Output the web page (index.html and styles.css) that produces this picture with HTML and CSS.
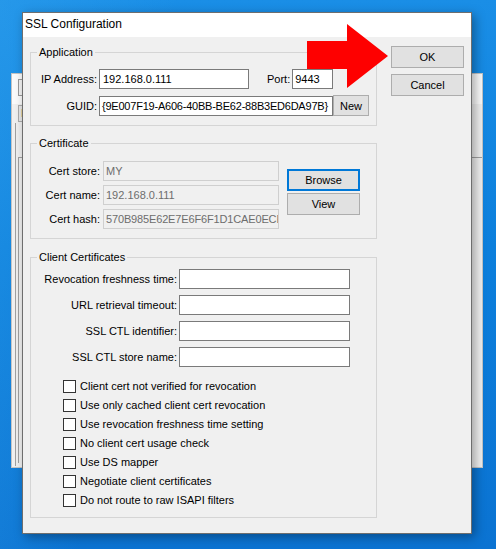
FILE: index.html
```html
<!DOCTYPE html>
<html>
<head>
<meta charset="utf-8">
<link rel="stylesheet" href="styles.css">
</head>
<body>
  <div class="bgwin">
    <div class="bg-title"><div class="bg-icon"></div></div>
    <div class="bg-body">
      <div class="bg-tab">L</div>
      <div class="bg-panel"><div class="bg-inner"></div></div>
    </div>
  </div>

  <div class="dialog">
    <div class="titlebar">SSL Configuration</div>
    <div class="client">
      <div class="groups">
        <fieldset class="group app">
          <legend>Application</legend>
          <div class="app-body">
            <div class="row">
              <span class="lbl lbl-app">IP Address:</span>
              <div class="tb tb-ip">192.168.0.111</div>
              <span class="lbl-port">Port:</span>
              <div class="tb tb-port">9443</div>
            </div>
            <div class="row row-end">
              <span class="lbl lbl-app">GUID:</span>
              <div class="tb tb-guid">{9E007F19-A606-40BB-BE62-88B3ED6DA97B}</div>
              <button class="btn btn-new">New</button>
            </div>
          </div>
        </fieldset>

        <fieldset class="group cert">
          <legend>Certificate</legend>
          <div class="cert-body">
            <div class="cert-fields">
              <div class="row"><span class="lbl lbl-cert">Cert store:</span><div class="tb tb-ro">MY</div></div>
              <div class="row"><span class="lbl lbl-cert">Cert name:</span><div class="tb tb-ro">192.168.0.111</div></div>
              <div class="row"><span class="lbl lbl-cert">Cert hash:</span><div class="tb tb-ro tb-hash">570B985E62E7E6F6F1D1CAE0ECE</div></div>
            </div>
            <div class="cert-buttons">
              <button class="btn btn-browse">Browse</button>
              <button class="btn btn-view">View</button>
            </div>
          </div>
        </fieldset>

        <fieldset class="group cc">
          <legend>Client Certificates</legend>
          <div class="cc-body">
            <div class="cc-fields">
              <div class="row"><span class="lbl lbl-cc">Revocation freshness time:</span><div class="tb tb-cc"></div></div>
              <div class="row"><span class="lbl lbl-cc">URL retrieval timeout:</span><div class="tb tb-cc"></div></div>
              <div class="row"><span class="lbl lbl-cc">SSL CTL identifier:</span><div class="tb tb-cc"></div></div>
              <div class="row"><span class="lbl lbl-cc">SSL CTL store name:</span><div class="tb tb-cc"></div></div>
            </div>
            <div class="checks">
              <div class="check"><span class="box"></span><span class="ctext">Client cert not verified for revocation</span></div>
              <div class="check"><span class="box"></span><span class="ctext">Use only cached client cert revocation</span></div>
              <div class="check"><span class="box"></span><span class="ctext">Use revocation freshness time setting</span></div>
              <div class="check"><span class="box"></span><span class="ctext">No client cert usage check</span></div>
              <div class="check"><span class="box"></span><span class="ctext">Use DS mapper</span></div>
              <div class="check"><span class="box"></span><span class="ctext">Negotiate client certificates</span></div>
              <div class="check"><span class="box"></span><span class="ctext">Do not route to raw ISAPI filters</span></div>
            </div>
          </div>
        </fieldset>
      </div>

      <div class="buttons">
        <button class="btn btn-main">OK</button>
        <button class="btn btn-main">Cancel</button>
      </div>
    </div>
  </div>

  <svg class="arrow" width="86" height="70" viewBox="0 0 86 70">
    <polygon points="2,19 42,19 42,2 83,34 42,66 42,47 2,47" fill="#fe0000"/>
  </svg>
</body>
</html>
```
FILE: styles.css
```css
* { box-sizing: border-box; }

body {
  margin: 0;
  width: 496px;
  height: 549px;
  overflow: hidden;
  position: relative;
  font-family: "Liberation Sans", Arial, sans-serif;
  font-size: 11px;
  color: #000;
  background:
    linear-gradient(100deg, rgba(60,170,240,0.35) 0%, rgba(60,170,240,0) 30%),
    linear-gradient(180deg, #1a8ee6 0%, #0c7fdc 45%, #0b73d2 100%);
}

/* background window */
.bgwin {
  position: absolute;
  left: 11px;
  top: 73px;
  width: 472px;
  height: 395px;
  border: 1px solid #c4c4c4;
  background: #f0f0f0;
}
.bg-title {
  height: 30px;
  background: #fbfbfb;
  padding: 5px 0 0 6px;
}
.bg-icon {
  width: 20px;
  height: 17px;
  border: 1px solid #9a9a9a;
  background: #f4f4f4;
}
.bg-body {
  padding: 1px 0 0 3px;
}
.bg-tab {
  margin-left: 3px;
  width: 30px;
  height: 17px;
  border: 1px solid #adadad;
  background: #e8e8e8;
  color: #a07a40;
  line-height: 15px;
  padding-left: 2px;
}
.bg-panel {
  margin-top: 1px;
  height: 343px;
  border-left: 1px solid #a0a0a0;
  padding: 34px 0 0 2px;
}
.bg-inner {
  height: 306px;
  border-top: 1px solid #a0a0a0;
  border-left: 1px solid #a0a0a0;
}

/* dialog */
.dialog {
  position: absolute;
  left: 22px;
  top: 12px;
  width: 450px;
  height: 522px;
  border: 1px solid #6e6e6e;
  background: #f0f0f0;
  box-shadow: 3px 3px 10px rgba(0, 0, 0, 0.35);
  display: flex;
  flex-direction: column;
}
.titlebar {
  height: 24px;
  flex: none;
  background: #fff;
  font-size: 12px;
  line-height: 22px;
  padding-left: 2px;
}
.client {
  display: grid;
  grid-template-columns: 347px 73px;
  column-gap: 14px;
  padding: 9px 7px 0 7px;
  align-items: start;
}

/* group boxes */
.group {
  margin: 0;
  padding: 0;
  border: 1px solid #d5d5d5;
  min-width: 0;
}
.group legend {
  margin-left: 6px;
  padding: 0 2px;
  font-size: 11px;
  line-height: 13px;
}
.cert { margin-top: 11px; }
.cc { margin-top: 12px; }

.row {
  display: flex;
  align-items: center;
}
.row-end { align-items: flex-end; }

.lbl {
  flex: none;
  text-align: right;
  white-space: nowrap;
  line-height: 18px;
  align-self: center;
}
.lbl-app { width: 68px; padding-right: 2px; }
.lbl-cert { width: 72px; padding-right: 3px; }
.lbl-cc { width: 148px; padding-right: 2px; }

.tb {
  flex: none;
  height: 20px;
  border: 1px solid #7a7a7a;
  background: #fff;
  padding: 0 3px;
  line-height: 18px;
  white-space: nowrap;
  overflow: hidden;
}
.tb-ip { width: 150px; }
.lbl-port { margin-left: 18px; margin-right: 2px; line-height: 18px; }
.tb-port { width: 41px; padding-left: 2px; }
.tb-guid { width: 234px; letter-spacing: -0.22px; padding-left: 2px; }
.tb-ro {
  width: 176px;
  border-color: #cfcfcf;
  background: #f0f0f0;
  color: #6d6d6d;
  padding-left: 2px;
}
.tb-hash { letter-spacing: -0.15px; }
.tb-cc { width: 171px; }

.app-body {
  padding: 10px 0 9px 0;
  display: flex;
  flex-direction: column;
  gap: 6px;
}
.cert-body {
  display: flex;
  padding: 11px 0 9px 0;
}
.cert-fields {
  display: flex;
  flex-direction: column;
  gap: 4px;
}
.cert-buttons {
  margin-left: 8px;
  margin-top: 8px;
  display: flex;
  flex-direction: column;
  gap: 2px;
}
.cc-body { padding: 5px 0 7px 0; }
.cc-fields {
  display: flex;
  flex-direction: column;
  gap: 6px;
}
.checks {
  margin-top: 10px;
  padding-left: 32px;
  display: flex;
  flex-direction: column;
}
.check {
  display: flex;
  align-items: center;
  height: 19px;
  gap: 4px;
}
.box {
  flex: none;
  width: 13px;
  height: 13px;
  border: 1px solid #333;
  background: #fff;
}
.ctext { line-height: 19px; white-space: nowrap; }

/* buttons */
.btn {
  font: inherit;
  font-size: 11px;
  color: #000;
  background: #e1e1e1;
  border: 1px solid #adadad;
  padding: 0;
  margin: 0;
  line-height: 18px;
}
.btn-new { width: 36px; height: 21px; flex: none; }
.btn-browse { width: 73px; height: 22px; border: 2px solid #0078d7; }
.btn-view { width: 73px; height: 22px; }
.buttons {
  display: flex;
  flex-direction: column;
  gap: 6px;
}
.btn-main { width: 73px; height: 22px; }

/* overlay arrow */
.arrow {
  position: absolute;
  left: 305px;
  top: 22px;
}
```
